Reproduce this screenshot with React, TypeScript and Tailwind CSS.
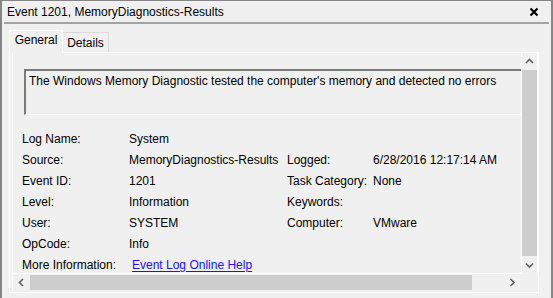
import React from "react";

function Chevron({ dir }: { dir: "up" | "down" | "left" | "right" }) {
  const paths: Record<string, string> = {
    up: "M1 5 L4.5 1.5 L8 5",
    down: "M1 1.5 L4.5 5 L8 1.5",
    left: "M5 1 L1.5 4.5 L5 8",
    right: "M1.5 1 L5 4.5 L1.5 8",
  };
  const horiz = dir === "up" || dir === "down";
  return (
    <svg width={horiz ? 9 : 7} height={horiz ? 7 : 9} viewBox={horiz ? "0 0 9 7" : "0 0 7 9"}>
      <path d={paths[dir]} fill="none" stroke="#606060" strokeWidth="1.6" />
    </svg>
  );
}

const rows: [string, string, string, string][] = [
  ["Log Name:", "System", "", ""],
  ["Source:", "MemoryDiagnostics-Results", "Logged:", "6/28/2016 12:17:14 AM"],
  ["Event ID:", "1201", "Task Category:", "None"],
  ["Level:", "Information", "Keywords:", ""],
  ["User:", "SYSTEM", "Computer:", "VMware"],
  ["OpCode:", "Info", "", ""],
];

export default function App() {
  return (
    <div className="w-[553px] h-[298px] bg-[#f0f0f0] border-l-2 border-t border-r-2 border-[#858585] flex flex-col text-[12px] leading-none text-black font-['Liberation_Sans',sans-serif] overflow-hidden">
      {/* title */}
      <div className="h-[23px] mx-[2px] border-b-2 border-[#a3a3a3] flex items-center justify-between pl-[3px] pr-[10px] pt-[1px] shrink-0">
        <span>Event 1201, MemoryDiagnostics-Results</span>
        <svg width="10" height="10" viewBox="0 0 10 10">
          <path d="M1.5 1.5 L8.5 8.5 M8.5 1.5 L1.5 8.5" stroke="#000" strokeWidth="2.2" />
        </svg>
      </div>

      {/* tabs */}
      <div className="flex items-end pl-[7px] mt-[6px] h-[23px] shrink-0 relative z-10">
        <div className="h-[23px] w-[54px] border-t border-l border-r border-white bg-[#f0f0f0] flex items-center justify-center pb-[4px]">
          General
        </div>
        <div className="h-[20px] w-[46px] border-t border-r border-[#dadada] bg-[#f0f0f0] flex items-center justify-center mb-[1px] pt-[1px]">
          Details
        </div>
      </div>

      {/* tab page */}
      <div className="ml-[7px] w-[530px] h-[241px] -mt-[1px] border border-white flex pl-[2px] pb-[1px] shrink-0">
        <div className="flex-1 border-l border-white flex flex-col min-w-0">
          <div className="flex flex-1 min-h-0">
            {/* viewport */}
            <div className="flex-1 min-w-0 overflow-hidden border-r border-b border-white">
              <div className="pl-[11px] pt-[16px] w-[700px]">
                <div className="h-[46px] w-[520px] border-t-2 border-l-2 border-[#7a7a7a] border-b border-b-white pl-[3px] pt-[4px]">
                  The Windows Memory Diagnostic tested the computer's memory and detected no errors
                </div>
              </div>
              <div className="pl-[9px] pt-[13px]">
                <div className="grid grid-cols-[107px_158px_86px_auto]">
                  {rows.map((r, i) => (
                    <React.Fragment key={i}>
                      <div className="h-[21px] flex items-center">{r[0]}</div>
                      <div className="h-[21px] flex items-center whitespace-nowrap">{r[1]}</div>
                      <div className="h-[21px] flex items-center whitespace-nowrap">{r[2]}</div>
                      <div className="h-[21px] flex items-center whitespace-nowrap">{r[3]}</div>
                    </React.Fragment>
                  ))}
                  <div className="h-[21px] flex items-center whitespace-nowrap">More Information:</div>
                  <div className="h-[21px] flex items-center whitespace-nowrap pl-[3px] col-span-3">
                    <span className="text-[#1414ff] underline underline-offset-2">Event Log Online Help</span>
                  </div>
                </div>
              </div>
            </div>
            {/* vertical scrollbar */}
            <div className="w-[16px] flex flex-col border-r border-white">
              <div className="h-[17px] flex items-center justify-center">
                <Chevron dir="up" />
              </div>
              <div className="h-[186px] bg-[#cdcdcd]" />
              <div className="flex-1 flex items-center justify-center">
                <Chevron dir="down" />
              </div>
            </div>
          </div>
          {/* horizontal scrollbar */}
          <div className="h-[17px] flex shrink-0">
            <div className="w-[17px] flex items-center justify-center">
              <Chevron dir="left" />
            </div>
            <div className="w-[442px] bg-[#cdcdcd] my-[1px]" />
            <div className="flex-1" />
            <div className="w-[17px] flex items-center justify-center">
              <Chevron dir="right" />
            </div>
            <div className="w-[17px]" />
          </div>
        </div>
      </div>
    </div>
  );
}
